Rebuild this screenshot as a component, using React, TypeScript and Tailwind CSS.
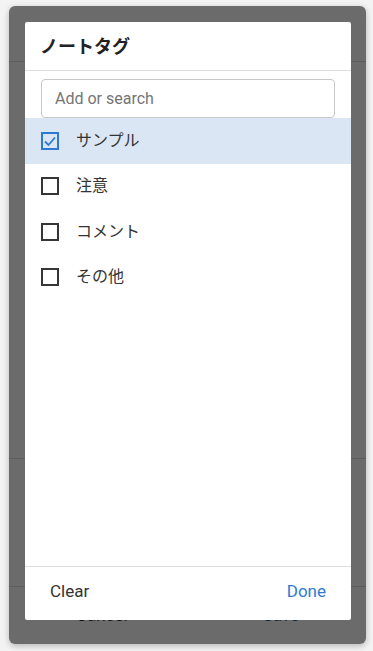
import React from "react";

const font = { fontFamily: 'Roboto, "Noto Sans CJK JP", "Noto Sans", sans-serif' };

function Check({ checked }: { checked: boolean }) {
  if (checked) {
    return (
      <div className="w-[18px] h-[18px] border-2 border-[#2e7ad0] flex items-center justify-center">
        <svg width="14" height="14" viewBox="0 0 14 14">
          <path d="M2 7.5 L5.5 11 L12 3.5" fill="none" stroke="#2e7ad0" strokeWidth="1.8" />
        </svg>
      </div>
    );
  }
  return <div className="w-[18px] h-[18px] border-2 border-[#363636]" />;
}

const tags = [
  { label: "サンプル", checked: true },
  { label: "注意", checked: false },
  { label: "コメント", checked: false },
  { label: "その他", checked: false },
];

export default function App() {
  return (
    <div className="w-[373px] h-[651px] bg-[#f3f3f3] pt-[6px] pl-[9px]" style={font}>
      <div className="relative w-[357px] h-[638px] rounded-[6px] bg-white overflow-hidden shadow-[0_2px_6px_rgba(0,0,0,0.25)] flex flex-col">
        <div className="h-[56px] border-b border-[#dddddd] shrink-0" />
        <div className="h-[396px] shrink-0" />
        <div className="h-[128px] border-t border-[#dddddd] shrink-0" />
        <div className="flex-1 border-t border-[#dddddd] flex items-center justify-between px-[67px] text-[17px]">
          <span className="text-[#333]">Cancel</span>
          <span className="text-[#1f5fa8]">Save</span>
        </div>
        <div className="absolute inset-0 bg-[rgba(0,0,0,0.58)]" />
        <div className="absolute left-[16px] top-[16px] w-[326px] h-[598px] bg-white rounded-[2px] flex flex-col">
          <div className="h-[49px] border-b border-[#dcdcdc] flex items-center pl-[15px] shrink-0">
            <span className="text-[18px] font-bold text-[#222]">ノートタグ</span>
          </div>
          <div className="px-[16px] pt-[8px] shrink-0">
            <div className="h-[39px] border border-[#c8c8c8] rounded-[4px] flex items-center pl-[13px] text-[16px] text-[#757575]">
              Add or search
            </div>
          </div>
          <div className="flex-1 flex flex-col">
            {tags.map((t) => (
              <div
                key={t.label}
                className={`h-[45.5px] flex items-center pl-[16px] gap-[17px] ${t.checked ? "bg-[#dae6f3]" : ""}`}
              >
                <Check checked={t.checked} />
                <span className="text-[16px] text-[#333]">{t.label}</span>
              </div>
            ))}
          </div>
          <div className="h-[54px] border-t border-[#dcdcdc] flex items-center justify-between pl-[25px] pr-[25px] pb-[4px] shrink-0">
            <span className="text-[17px] text-[#333]">Clear</span>
            <span className="text-[17px] text-[#2e7ad0]">Done</span>
          </div>
        </div>
      </div>
    </div>
  );
}
